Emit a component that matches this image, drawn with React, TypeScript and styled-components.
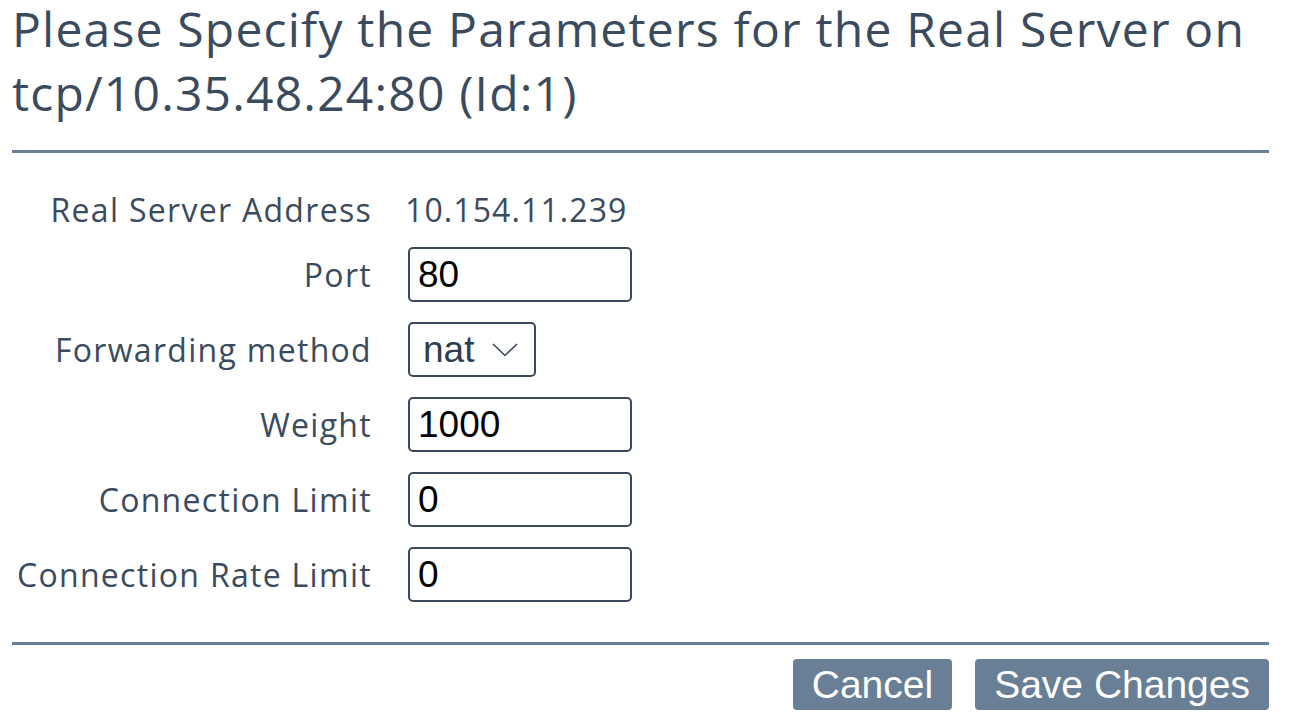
import React from "react";
import styled, { createGlobalStyle } from "styled-components";

const Global = createGlobalStyle`
  html, body { margin: 0; padding: 0; background: #ffffff; }
  body { font-family: "Open Sans", "Noto Sans", sans-serif; color: #3b4b5e; }
`;

const Page = styled.div`
  padding: 0 23px 0 12px;
`;

const Title = styled.h1`
  margin: -3px 0 0 0;
  font-family: "Open Sans", sans-serif;
  font-weight: 400;
  font-size: 48px;
  letter-spacing: 1.2px;
  line-height: 64px;
  color: #3b4b5e;
`;

const Rule = styled.hr<{ $top: number }>`
  border: 0;
  height: 3px;
  background: #687f95;
  margin: ${(p) => p.$top}px 0 0 0;
`;

const Form = styled.div`
  display: grid;
  grid-template-columns: 360px auto;
  column-gap: 36px;
  row-gap: 20px;
  margin-top: 40px;
  align-items: center;
`;

const Label = styled.div`
  text-align: right;
  font-size: 32px;
  letter-spacing: 1.3px;
  line-height: 34px;
  color: #3b4b5e;
  white-space: nowrap;
`;

const Value = styled.div`
  margin-left: -3px;
  font-size: 32px;
  letter-spacing: 1.1px;
  line-height: 34px;
  color: #3b4b5e;
`;

const Field = styled.div`
  display: flex;
  align-items: center;
`;

const Input = styled.input`
  box-sizing: border-box;
  width: 224px;
  height: 55px;
  border: 2px solid #3a4a5c;
  border-radius: 5px;
  padding: 0 8px;
  font-family: "Liberation Sans", Arial, sans-serif;
  font-size: 37px;
  color: #000;
  background: #fff;
  outline: none;
`;

const SelectBox = styled.div`
  box-sizing: border-box;
  height: 55px;
  border: 2px solid #3a4a5c;
  border-radius: 5px;
  display: flex;
  align-items: center;
  padding: 0 16px 0 13px;
  gap: 18px;
  font-family: "Liberation Sans", Arial, sans-serif;
  font-size: 37px;
  color: #2f3e4f;
`;

const Footer = styled.div`
  display: flex;
  justify-content: flex-end;
  gap: 23px;
  margin-top: 14px;
`;

const Button = styled.button`
  box-sizing: border-box;
  height: 51px;
  border: 0;
  border-radius: 4px;
  background: #687f95;
  color: #fff;
  font-family: "Liberation Sans", Arial, sans-serif;
  font-size: 39px;
  line-height: 51px;
  padding: 0 19px;
  cursor: pointer;
`;

const Chevron = () => (
  <svg width="26" height="14" viewBox="0 0 26 14" fill="none">
    <path d="M1 1 L13 12.5 L25 1" stroke="#3a4a5c" strokeWidth="1.6" />
  </svg>
);

const numericRows: { label: string; value: string }[] = [
  { label: "Weight", value: "1000" },
  { label: "Connection Limit", value: "0" },
  { label: "Connection Rate Limit", value: "0" },
];

export default function App() {
  return (
    <Page>
      <Global />
      <Title>
        Please Specify the Parameters for the Real Server on tcp/10.35.48.24:80 (Id:1)
      </Title>
      <Rule $top={25} />
      <Form>
        <Label>Real Server Address</Label>
        <Value>10.154.11.239</Value>
        <Label>Port</Label>
        <Field>
          <Input defaultValue="80" />
        </Field>
        <Label>Forwarding method</Label>
        <Field>
          <SelectBox>
            nat
            <Chevron />
          </SelectBox>
        </Field>
        {numericRows.map((r) => (
          <React.Fragment key={r.label}>
            <Label>{r.label}</Label>
            <Field>
              <Input defaultValue={r.value} />
            </Field>
          </React.Fragment>
        ))}
      </Form>
      <Rule $top={40} />
      <Footer>
        <Button>Cancel</Button>
        <Button>Save Changes</Button>
      </Footer>
    </Page>
  );
}
